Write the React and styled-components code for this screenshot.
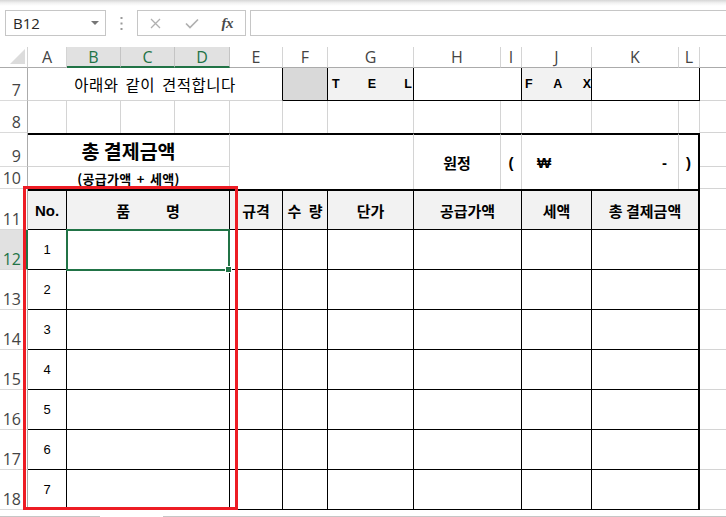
import React from "react";
import styled, { createGlobalStyle, css } from "styled-components";

const Global = createGlobalStyle`
  html, body { margin: 0; padding: 0; background: #fff; }
  body { font-family: "Liberation Sans", "Noto Sans CJK KR", sans-serif; overflow: hidden; }
`;

const KR = `"Noto Sans CJK KR", "Liberation Sans", sans-serif`;
const UI = `"Open Sans", "Noto Sans", sans-serif`;
const GREEN = "#217346";

const Page = styled.div`
  width: 726px;
  height: 517px;
  overflow: hidden;
  background: #fff;
  display: flex;
  flex-direction: column;
`;

/* ---------- formula toolbar ---------- */
const Toolbar = styled.div`
  flex: none;
  height: 47px;
  box-sizing: border-box;
  padding: 10px 0 0 5px;
  display: flex;
  align-items: flex-start;
  background: linear-gradient(to bottom, #d6d6d6 0px, #f2f2f2 3px, #ffffff 6px);
`;

const NameBox = styled.div`
  width: 101px;
  height: 26px;
  box-sizing: border-box;
  border: 1px solid #c6c6c6;
  background: #fff;
  display: flex;
  align-items: center;
  justify-content: space-between;
  padding: 0 6px 0 7px;
  font-family: ${UI};
  font-size: 15px;
  color: #262626;
`;

const Caret = styled.span`
  width: 0;
  height: 0;
  border-left: 4px solid transparent;
  border-right: 4px solid transparent;
  border-top: 4px solid #767676;
`;

const Grip = styled.div`
  width: 31px;
  height: 26px;
  display: flex;
  align-items: center;
  justify-content: center;
`;

const FuncBox = styled.div`
  width: 109px;
  height: 26px;
  box-sizing: border-box;
  border: 1px solid #c6c6c6;
  background: #fff;
  display: flex;
`;

const IconSlot = styled.div`
  flex: 1;
  display: flex;
  align-items: center;
  justify-content: center;
`;

const Fx = styled.span`
  font-family: "Liberation Serif", serif;
  font-style: italic;
  font-weight: bold;
  font-size: 15px;
  color: #4a4a4a;
  letter-spacing: -0.5px;
`;

const FormulaInput = styled.div`
  flex: 1;
  margin-left: 4px;
  height: 26px;
  box-sizing: border-box;
  border: 1px solid #c6c6c6;
  border-right: none;
  background: #fff;
`;

/* ---------- sheet grid ---------- */
const Sheet = styled.div`
  flex: none;
  position: relative;
  display: grid;
  grid-template-columns: 28px 39px 54px 54px 55px 53px 45px 86px 87px 21px 70px 87px 21px 1fr;
  grid-template-rows: 21px 33px 32px 34px 22px 41px repeat(7, 40px);
`;

const Corner = styled.div`
  grid-column: 1;
  grid-row: 1;
  box-sizing: border-box;
  border-right: 1px solid #d4d4d4;
  border-bottom: 1px solid #ababab;
  display: flex;
  align-items: flex-end;
  justify-content: flex-end;
  padding: 0 2px 3px 0;
`;

const ColHead = styled.div`
  grid-column: ${(p) => p.$c};
  grid-row: 1;
  box-sizing: border-box;
  border-right: ${(p) => (p.$last ? "none" : "1px solid #d4d4d4")};
  border-bottom: 1px solid #ababab;
  display: flex;
  align-items: center;
  justify-content: center;
  font-family: ${UI};
  font-size: 16px;
  color: #444;
  background: #fff;
  ${(p) =>
    p.$sel &&
    css`
      background: #e1e1e1;
      color: ${GREEN};
      border-right-color: #c4c4c4;
      border-bottom: 2px solid ${GREEN};
    `}
`;

const RowHead = styled.div`
  grid-column: 1;
  grid-row: ${(p) => p.$r};
  box-sizing: border-box;
  border-right: 1px solid #ababab;
  border-bottom: 1px solid #dadada;
  display: flex;
  align-items: flex-end;
  justify-content: flex-end;
  padding: 0 6px 1px 0;
  font-family: ${UI};
  font-size: 16px;
  line-height: 1.15;
  color: #444;
  background: #fff;
  ${(p) =>
    p.$sel &&
    css`
      background: #e1e1e1;
      color: ${GREEN};
      border-right: 2px solid ${GREEN};
      padding-right: 5px;
    `}
`;

const edge = (v) =>
  ({
    g: "1px solid #d4d4d4",
    k: "1px solid #000",
    K: "2px solid #000",
    n: "none",
  }[v || "g"]);

const Cell = styled.div`
  grid-column: ${(p) => p.$c};
  grid-row: ${(p) => p.$r};
  box-sizing: border-box;
  border-top: ${(p) => (p.$bt ? edge(p.$bt) : "none")};
  border-right: ${(p) => edge(p.$br)};
  border-bottom: ${(p) => edge(p.$bb)};
  background: ${(p) => p.$bg || "#fff"};
  display: flex;
  align-items: center;
  justify-content: ${(p) => p.$jc || "center"};
  padding: ${(p) => p.$pad || "0"};
  min-width: 0;
  white-space: nowrap;
  color: #000;
`;

const Notice = styled.span`
  font-family: ${KR};
  font-size: 15.5px;
  letter-spacing: 0.5px;
  word-spacing: 3px;
`;

const Title = styled.span`
  font-family: ${KR};
  font-weight: bold;
  font-size: 19.5px;
`;

const Sub = styled.span`
  font-family: ${KR};
  font-weight: bold;
  font-size: 13px;
  word-spacing: 2px;
  letter-spacing: 0.3px;
`;

const Label = styled.span`
  font-family: ${KR};
  font-weight: bold;
  font-size: 15px;
  word-spacing: ${(p) => p.$ws || 0}px;
  display: inline-flex;
  gap: ${(p) => p.$gap || 0}px;
`;

const Mark = styled.span`
  font-family: "Liberation Sans", "Noto Sans CJK KR", sans-serif;
  font-weight: bold;
  font-size: 15px;
`;

const Head = styled.span`
  font-family: "Liberation Sans", sans-serif;
  font-weight: bold;
  font-size: 15px;
`;

const Num = styled.span`
  font-family: "Liberation Sans", sans-serif;
  font-size: 13px;
`;

const Letter = styled.span`
  font-family: "Liberation Sans", sans-serif;
  font-weight: bold;
  font-size: 12.5px;
`;

const Selection = styled.div`
  grid-column: 3 / 6;
  grid-row: 7 / 8;
  position: absolute;
  top: -1px;
  left: -1px;
  right: 0;
  bottom: -1px;
  border: 2px solid ${GREEN};
  pointer-events: none;
`;

const Handle = styled.div`
  position: absolute;
  right: -4px;
  bottom: -4px;
  width: 7px;
  height: 7px;
  box-sizing: border-box;
  border: 1px solid #fff;
  background: ${GREEN};
`;

const Highlight = styled.div`
  grid-column: 2 / 6;
  grid-row: 6 / 14;
  position: absolute;
  top: -3px;
  left: -5px;
  right: -8px;
  bottom: 0;
  border: 3px solid #ed1c24;
  pointer-events: none;
`;

const BottomBar = styled.div`
  flex: none;
  height: 7px;
  display: flex;
  align-items: flex-end;
`;

const BarLine = styled.div`
  height: 1px;
  background: #c6c6c6;
  width: ${(p) => (p.$w ? `${p.$w}px` : "auto")};
  flex: ${(p) => (p.$w ? "none" : "1")};
`;

const BarGap = styled.div`
  width: 63px;
  flex: none;
`;

const colHeads = [
  ["A", 2],
  ["B", 3, true],
  ["C", 4, true],
  ["D", 5, true],
  ["E", 6],
  ["F", 7],
  ["G", 8],
  ["H", 9],
  ["I", 10],
  ["J", 11],
  ["K", 12],
  ["L", 13],
];

const row8Cols = [2, 3, 4, 5, 6, 7, 8, 9, 10, 11, 12, 13];

const tableCols = ["6", "7", "8", "9 / 11", "11"];

export default function App() {
  const items = [1, 2, 3, 4, 5, 6, 7];
  return (
    <Page>
      <Global />
      <Toolbar>
        <NameBox>
          B12
          <Caret />
        </NameBox>
        <Grip>
          <svg width="3" height="13" viewBox="0 0 3 13">
            <rect x="0.5" y="0" width="2" height="2" fill="#9a9a9a" />
            <rect x="0.5" y="5.5" width="2" height="2" fill="#9a9a9a" />
            <rect x="0.5" y="11" width="2" height="2" fill="#9a9a9a" />
          </svg>
        </Grip>
        <FuncBox>
          <IconSlot>
            <svg width="11" height="11" viewBox="0 0 11 11">
              <path d="M1 1L10 10M10 1L1 10" stroke="#b0b0b0" strokeWidth="1.3" fill="none" />
            </svg>
          </IconSlot>
          <IconSlot>
            <svg width="14" height="11" viewBox="0 0 14 11">
              <path d="M1 5.5L5 9.5L13 1.5" stroke="#b0b0b0" strokeWidth="1.7" fill="none" />
            </svg>
          </IconSlot>
          <IconSlot>
            <Fx>fx</Fx>
          </IconSlot>
        </FuncBox>
        <FormulaInput />
      </Toolbar>

      <Sheet>
        <Corner>
          <svg width="15" height="15" viewBox="0 0 15 15">
            <polygon points="15,0 15,15 0,15" fill="#dcdcdc" />
          </svg>
        </Corner>
        {colHeads.map(([l, c, sel]) => (
          <ColHead key={l} $c={c} $sel={sel}>
            {l}
          </ColHead>
        ))}
        <ColHead $c={14} $last />

        {/* row 7 */}
        <RowHead $r={2}>7</RowHead>
        <Cell $c="2 / 7" $r={2} $br="k">
          <Notice>아래와 같이 견적합니다</Notice>
        </Cell>
        <Cell $c="7" $r={2} $br="k" $bb="k" $bg="#d9d9d9" />
        <Cell $c="8" $r={2} $br="k" $bb="k" $bg="#f2f2f2" $jc="space-between" $pad="0 1px 0 4px">
          <Letter>T</Letter>
          <Letter>E</Letter>
          <Letter>L</Letter>
        </Cell>
        <Cell $c="9 / 11" $r={2} $br="k" $bb="k" />
        <Cell $c="11" $r={2} $br="k" $bb="k" $bg="#f2f2f2" $jc="space-between" $pad="0 0 0 3px">
          <Letter>F</Letter>
          <Letter>A</Letter>
          <Letter>X</Letter>
        </Cell>
        <Cell $c="12 / 14" $r={2} $br="k" $bb="k" />
        <Cell $c="14" $r={2} $br="n" />

        {/* row 8 */}
        <RowHead $r={3}>8</RowHead>
        {row8Cols.map((c) => (
          <Cell key={c} $c={`${c}`} $r={3} $bb="n" />
        ))}
        <Cell $c="14" $r={3} $br="n" />

        {/* rows 9-10 */}
        <RowHead $r={4}>9</RowHead>
        <RowHead $r={5}>10</RowHead>
        <Cell $c="2 / 6" $r={4} $bt="K">
          <Title>총 결제금액</Title>
        </Cell>
        <Cell $c="2 / 6" $r={5} $bb="n">
          <Sub>(공급가액 + 세액)</Sub>
        </Cell>
        <Cell $c="6 / 9" $r="4 / 6" $bt="K" $bb="n" />
        <Cell $c="9" $r="4 / 6" $bt="K" $bb="n">
          <Label>원정</Label>
        </Cell>
        <Cell $c="10" $r="4 / 6" $bt="K" $bb="n">
          <Mark>(</Mark>
        </Cell>
        <Cell $c="11 / 13" $r="4 / 6" $bt="K" $bb="n" $jc="space-between" $pad="0 11px 0 15px">
          <Mark>₩</Mark>
          <Mark>-</Mark>
        </Cell>
        <Cell $c="13" $r="4 / 6" $bt="K" $bb="n" $br="K">
          <Mark>)</Mark>
        </Cell>
        <Cell $c="14" $r={4} $br="n" />
        <Cell $c="14" $r={5} $br="n" />

        {/* row 11 header */}
        <RowHead $r={6}>11</RowHead>
        <Cell $c="2" $r={6} $bt="K" $br="k" $bb="k" $bg="#f2f2f2">
          <Head>No.</Head>
        </Cell>
        <Cell $c="3 / 6" $r={6} $bt="K" $br="k" $bb="k" $bg="#f2f2f2">
          <Label $gap={36}>
            <span>품</span>
            <span>명</span>
          </Label>
        </Cell>
        <Cell $c="6" $r={6} $bt="K" $br="k" $bb="k" $bg="#f2f2f2">
          <Label>규격</Label>
        </Cell>
        <Cell $c="7" $r={6} $bt="K" $br="k" $bb="k" $bg="#f2f2f2">
          <Label $ws={4}>수 량</Label>
        </Cell>
        <Cell $c="8" $r={6} $bt="K" $br="k" $bb="k" $bg="#f2f2f2">
          <Label>단가</Label>
        </Cell>
        <Cell $c="9 / 11" $r={6} $bt="K" $br="k" $bb="k" $bg="#f2f2f2">
          <Label>공급가액</Label>
        </Cell>
        <Cell $c="11" $r={6} $bt="K" $br="k" $bb="k" $bg="#f2f2f2">
          <Label>세액</Label>
        </Cell>
        <Cell $c="12 / 14" $r={6} $bt="K" $br="K" $bb="k" $bg="#f2f2f2">
          <Label>총 결제금액</Label>
        </Cell>
        <Cell $c="14" $r={6} $br="n" />

        {/* item rows 12-18 */}
        {items.map((n) => {
          const r = 6 + n;
          return (
            <React.Fragment key={n}>
              <RowHead $r={r} $sel={n === 1}>
                {11 + n}
              </RowHead>
              <Cell $c="2" $r={r} $br="k" $bb="k">
                <Num>{n}</Num>
              </Cell>
              <Cell $c="3 / 6" $r={r} $br="k" $bb="k" />
              {tableCols.map((c) => (
                <Cell key={c} $c={c} $r={r} $br="k" $bb="k" />
              ))}
              <Cell $c="12 / 14" $r={r} $br="K" $bb="k" />
              <Cell $c="14" $r={r} $br="n" />
            </React.Fragment>
          );
        })}

        <Selection>
          <Handle />
        </Selection>
        <Highlight />
      </Sheet>

      <BottomBar>
        <BarLine $w={100} />
        <BarGap />
        <BarLine />
      </BottomBar>
    </Page>
  );
}
